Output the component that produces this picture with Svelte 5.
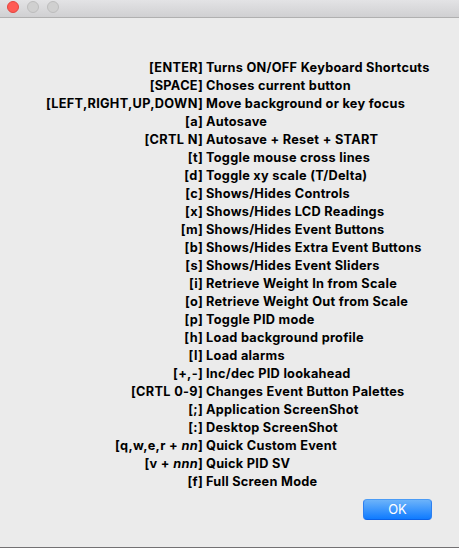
<script>
  const shortcuts = [
    ['ENTER', 'Turns ON/OFF Keyboard Shortcuts'],
    ['SPACE', 'Choses current button'],
    ['LEFT,RIGHT,UP,DOWN', 'Move background or key focus'],
    ['a', 'Autosave'],
    ['CRTL N', 'Autosave + Reset + START'],
    ['t', 'Toggle mouse cross lines'],
    ['d', 'Toggle xy scale (T/Delta)'],
    ['c', 'Shows/Hides Controls'],
    ['x', 'Shows/Hides LCD Readings'],
    ['m', 'Shows/Hides Event Buttons'],
    ['b', 'Shows/Hides Extra Event Buttons'],
    ['s', 'Shows/Hides Event Sliders'],
    ['i', 'Retrieve Weight In from Scale'],
    ['o', 'Retrieve Weight Out from Scale'],
    ['p', 'Toggle PID mode'],
    ['h', 'Load background profile'],
    ['l', 'Load alarms'],
    ['+,-', 'Inc/dec PID lookahead'],
    ['CRTL 0-9', 'Changes Event Button Palettes'],
    [';', 'Application ScreenShot'],
    [':', 'Desktop ScreenShot'],
    ['q,w,e,r + ', 'Quick Custom Event', 'nn'],
    ['v + ', 'Quick PID SV', 'nnn'],
    ['f', 'Full Screen Mode']
  ];
</script>

<div class="window">
  <header class="titlebar">
    <span class="light close"></span>
    <span class="light"></span>
    <span class="light"></span>
  </header>
  <main>
    <div class="list">
      {#each shortcuts as [key, label, variable]}
        <div class="row">
          <span class="key">[{key}{#if variable}<i>{variable}</i>{/if}]</span>
          <span class="label">{label}</span>
        </div>
      {/each}
    </div>
    <footer><button>OK</button></footer>
  </main>
</div>

<style>
  .window {
    box-sizing: border-box;
    width: 459px;
    height: 548px;
    display: flex;
    flex-direction: column;
    overflow: hidden;
    background: #ebebeb;
    border-bottom: 1px solid #737173;
    font-family: Inter, "Liberation Sans", sans-serif;
    color: #000;
  }
  .titlebar {
    box-sizing: border-box;
    flex: none;
    height: 18px;
    display: flex;
    gap: 8px;
    padding: 1px 0 0 7px;
    background: linear-gradient(#e3e3e5, #d0d0d2);
    border-bottom: 1px solid #b0b0b0;
  }
  .light {
    box-sizing: border-box;
    width: 12px;
    height: 12px;
    border: 1px solid #bdbdbd;
    border-radius: 50%;
    background: #d0d0d0;
  }
  .close {
    background: #ff5b54;
    border-color: #e2453f;
  }
  .list {
    padding-top: 41px;
  }
  .row {
    display: flex;
    gap: 3px;
    height: 18px;
    line-height: 18px;
    font-size: 12.75px;
    font-weight: 650;
    letter-spacing: 0.25px;
    word-spacing: 0.1px;
    white-space: pre;
  }
  .key {
    width: 203px;
    text-align: right;
    letter-spacing: 0.29px;
  }
  footer {
    display: flex;
    justify-content: flex-end;
    padding: 8px 27px 0 0;
  }
  button {
    width: 69px;
    height: 21px;
    padding: 0;
    border: 1px solid;
    border-color: #4a9bf5 #2c7ff0 #0a62e8;
    border-radius: 4px;
    background: linear-gradient(#6cb3fa, #0f7bff);
    color: #fff;
    font: 400 13px/19px Inter, "Liberation Sans", sans-serif;
  }
</style>
